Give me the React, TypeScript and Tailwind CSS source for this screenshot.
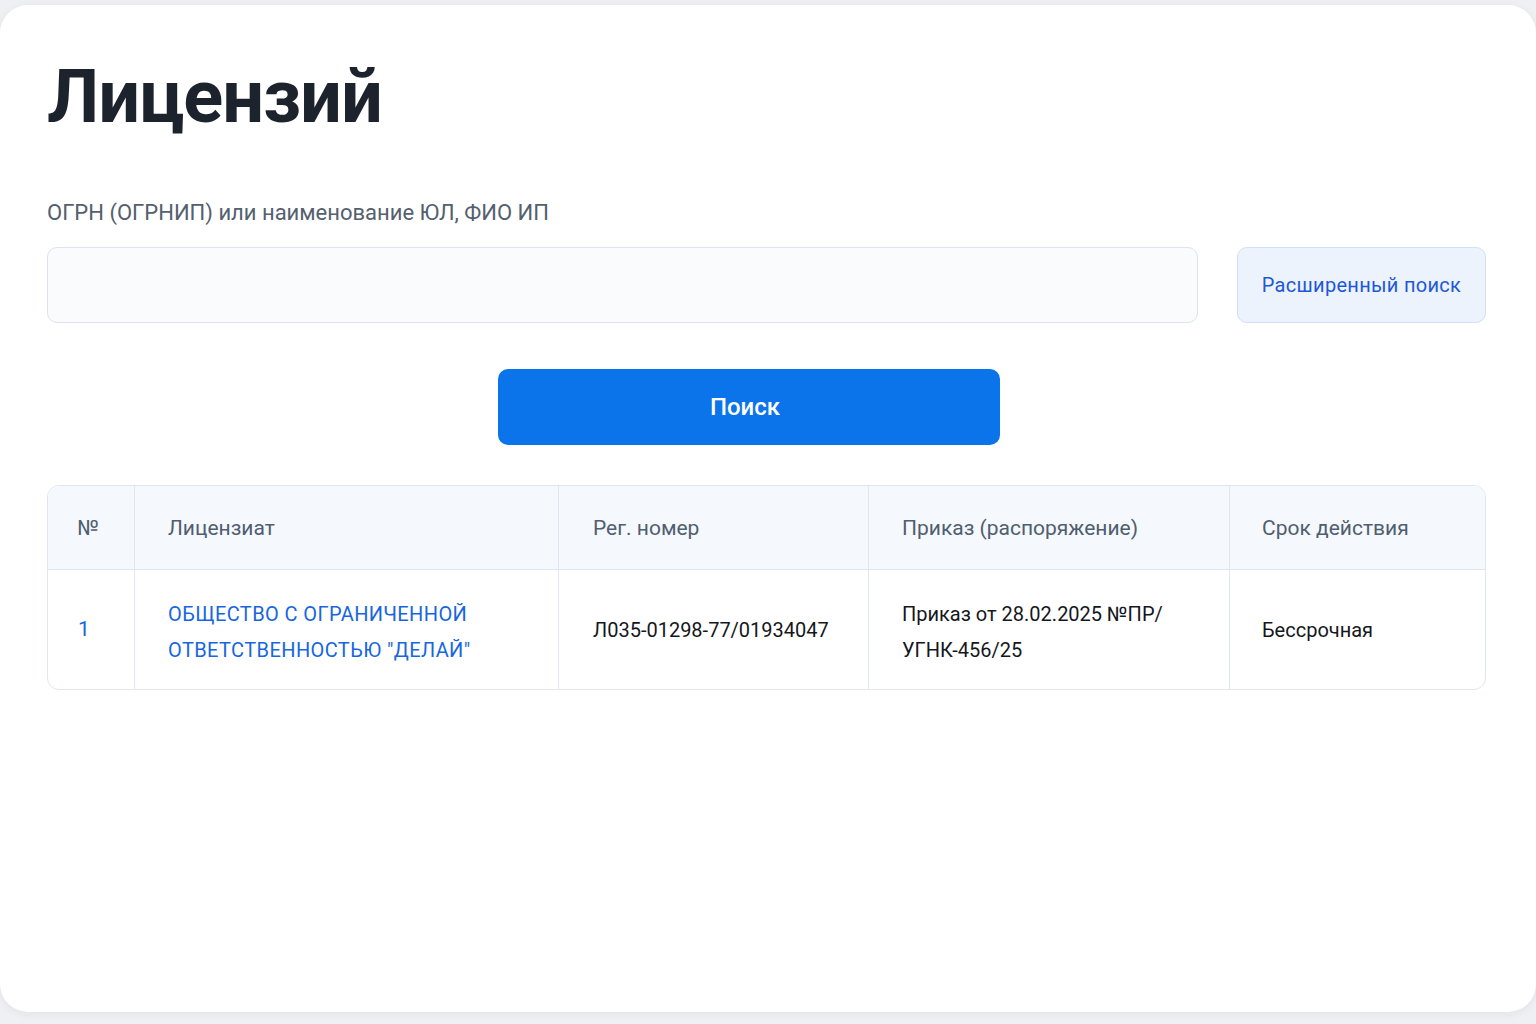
import React from "react";

const columns = [
  { title: "№", width: "w-[86px]", pad: "pl-[29px]" },
  { title: "Лицензиат", width: "w-[424px]", pad: "pl-[33px]" },
  { title: "Рег. номер", width: "w-[310px]", pad: "pl-[34px]" },
  { title: "Приказ (распоряжение)", width: "w-[361px]", pad: "pl-[33px]" },
  { title: "Срок действия", width: "flex-1", pad: "pl-[32px]" },
];

export default function App() {
  return (
    <div
      className="min-h-screen bg-[#eef0f3] pt-[5px] pb-[12px]"
      style={{ fontFamily: "Roboto, 'Noto Sans', sans-serif" }}
    >
      <div className="h-[1007px] rounded-[28px] bg-white shadow-[0_2px_10px_rgba(15,23,42,0.06)] pl-[47px] pr-[50px] pt-[49px]">
        {/* Title */}
        <h1 className="text-[74px] leading-[86px] font-bold tracking-[-1px] text-[#1c232d]">
          Лицензий
        </h1>

        {/* Search form */}
        <div className="mt-[59px]">
          <label className="block text-[22px] leading-[28px] text-[#54606e]">
            ОГРН (ОГРНИП) или наименование ЮЛ, ФИО ИП
          </label>
          <div className="mt-[20px] flex gap-[39px]">
            <input
              type="text"
              className="h-[76px] flex-1 rounded-[10px] border border-[#dbe4f0] bg-[#f9fbfd] px-5 text-[20px] outline-none"
            />
            <button className="h-[76px] w-[249px] rounded-[10px] border border-[#d3e0f3] bg-[#edf3fc] text-[20px] text-[#1d58d8] tracking-[0.3px]">
              Расширенный поиск
            </button>
          </div>
          <div className="mt-[46px] flex">
            <button className="ml-[451px] h-[76px] w-[502px] rounded-[10px] bg-[#0b74ea] pr-[8px] text-[24px] font-medium text-white">
              Поиск
            </button>
          </div>
        </div>

        {/* Results table */}
        <div className="mt-[40px] overflow-hidden rounded-[12px] border border-[#dfe7f2]">
          <div className="flex h-[84px] bg-[#f5f8fc] border-b border-[#dfe7f2]">
            {columns.map((col, i) => (
              <div
                key={i}
                className={`${col.width} ${col.pad} pt-[3px] flex items-center text-[21px] text-[#4f5e70] ${
                  i > 0 ? "border-l border-[#dfe7f2]" : ""
                }`}
              >
                {col.title}
              </div>
            ))}
          </div>
          <div className="flex h-[119px] text-[20px] text-[#14171c]">
            <div className="w-[86px] pl-[30px] flex items-center text-[21px] text-[#1766e0]">1</div>
            <div className="w-[424px] pl-[33px] pt-[4px] flex items-center border-l border-[#dfe7f2]">
              <a href="#" className="leading-[36px] text-[#1766e0] tracking-[0.4px]">
                ОБЩЕСТВО С ОГРАНИЧЕННОЙ
                <br />
                ОТВЕТСТВЕННОСТЬЮ "ДЕЛАЙ"
              </a>
            </div>
            <div className="w-[310px] pl-[34px] flex items-center border-l border-[#dfe7f2]">
              Л035-01298-77/01934047
            </div>
            <div className="w-[361px] pl-[33px] pt-[4px] flex items-center border-l border-[#dfe7f2] leading-[36px]">
              <span>
                Приказ от 28.02.2025 №ПР/
                <br />
                УГНК-456/25
              </span>
            </div>
            <div className="flex-1 pl-[32px] flex items-center border-l border-[#dfe7f2]">
              Бессрочная
            </div>
          </div>
        </div>
      </div>
    </div>
  );
}
